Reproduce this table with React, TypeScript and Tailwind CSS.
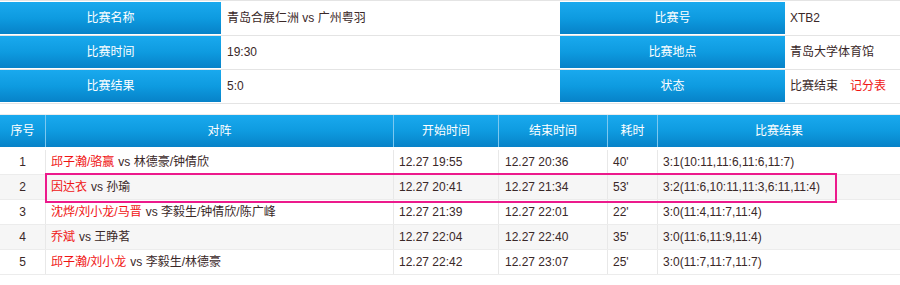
import React from 'react';

const font = { fontFamily: '"Liberation Sans", "Noto Sans CJK SC", sans-serif' };

const blue = 'bg-gradient-to-b from-[#19a9ee] via-[#0e9be0] to-[#0782c8] text-white';

type Row = {
  no: number;
  red: string;
  black: string;
  start: string;
  end: string;
  dur: string;
  result: string;
};

const rows: Row[] = [
  { no: 1, red: '邱子瀚/骆赢', black: '林德豪/钟倩欣', start: '12.27 19:55', end: '12.27 20:36', dur: "40'", result: '3:1(10:11,11:6,11:6,11:7)' },
  { no: 2, red: '因达衣', black: '孙瑜', start: '12.27 20:41', end: '12.27 21:34', dur: "53'", result: '3:2(11:6,10:11,11:3,6:11,11:4)' },
  { no: 3, red: '沈烨/刘小龙/马晋', black: '李毅生/钟倩欣/陈广峰', start: '12.27 21:39', end: '12.27 22:01', dur: "22'", result: '3:0(11:4,11:7,11:4)' },
  { no: 4, red: '乔斌', black: '王睁茗', start: '12.27 22:04', end: '12.27 22:40', dur: "35'", result: '3:0(11:6,11:9,11:4)' },
  { no: 5, red: '邱子瀚/刘小龙', black: '李毅生/林德豪', start: '12.27 22:42', end: '12.27 23:07', dur: "25'", result: '3:0(11:7,11:7,11:7)' },
];

function InfoRow({ l1, v1, l2, v2 }: { l1: string; v1: React.ReactNode; l2: string; v2: React.ReactNode }) {
  return (
    <div className="grid grid-cols-[221px_339px_225px_1fr] h-[34px] border-b border-[#e4e4e4] pb-px">
      <div className={`${blue} flex items-center justify-center`}>{l1}</div>
      <div className="flex items-center pl-[6px]">{v1}</div>
      <div className={`${blue} flex items-center justify-center`}>{l2}</div>
      <div className="flex items-center pl-[5px]">{v2}</div>
    </div>
  );
}

const cols = 'grid grid-cols-[45px_348px_105px_109px_50px_1fr]';

export default function App() {
  return (
    <div className="w-[900px] h-[285px] bg-white text-[12px] text-[#3a2828] overflow-hidden" style={font}>
      <div className="border-t border-[#e4e4e4] pt-px">
        <InfoRow l1="比赛名称" v1="青岛合展仁洲 vs 广州粤羽" l2="比赛号" v2="XTB2" />
        <InfoRow l1="比赛时间" v1="19:30" l2="比赛地点" v2="青岛大学体育馆" />
        <InfoRow
          l1="比赛结果"
          v1="5:0"
          l2="状态"
          v2={
            <span>
              比赛结束<span className="ml-[12px] text-[#f01414]">记分表</span>
            </span>
          }
        />
      </div>

      <div className="relative mt-[10px] border-t border-[#ececec]">
        <div className={`${cols} ${blue} h-[32px]`}>
          {['序号', '对阵', '开始时间', '结束时间', '耗时', '比赛结果'].map((h, i) => (
            <div key={h} className={`flex items-center justify-center ${i > 0 ? 'border-l border-[#7cc8f0]' : ''}`}>
              {h}
            </div>
          ))}
        </div>
        <div className="h-[3px]" />
        {rows.map((r, i) => (
          <div key={r.no} className={`${cols} h-[25px] border-b border-[#ececec] ${i % 2 === 1 ? 'bg-[#f6f6f6]' : 'bg-white'}`}>
            <div className="flex items-center justify-center">{r.no}</div>
            <div className="flex items-center pl-[5px] border-l border-[#e8e8e8]">
              <span className="text-[#f01414]">{r.red}</span>
              <span className="ml-[4px]">vs {r.black}</span>
            </div>
            <div className="flex items-center pl-[5px] border-l border-[#e8e8e8]">{r.start}</div>
            <div className="flex items-center pl-[6px] border-l border-[#e8e8e8]">{r.end}</div>
            <div className="flex items-center pl-[5px] border-l border-[#e8e8e8]">{r.dur}</div>
            <div className="flex items-center pl-[5px] border-l border-[#e8e8e8]">{r.result}</div>
          </div>
        ))}
        <div className="absolute left-[45px] top-[58px] w-[792px] h-[30px] border-2 border-[#ec1a8c] pointer-events-none" />
      </div>
    </div>
  );
}
